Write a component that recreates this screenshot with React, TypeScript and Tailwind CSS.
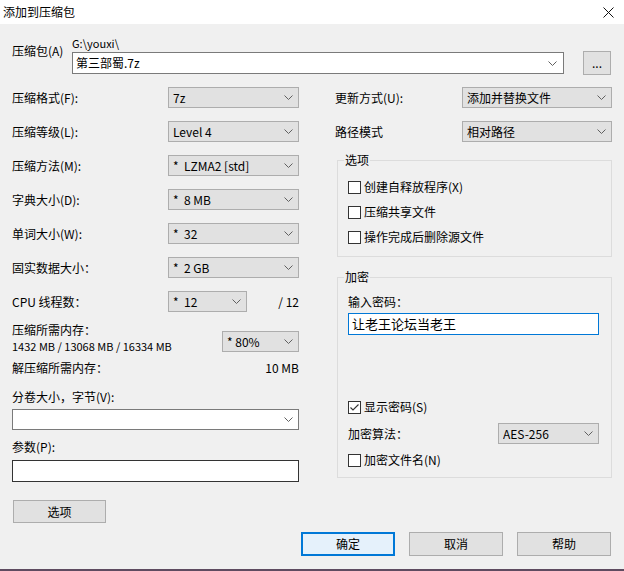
import React from "react";

const FONT = { fontFamily: '"Noto Sans CJK SC", "Liberation Sans", sans-serif' };

function Chevron() {
  return (
    <svg width="9" height="5" viewBox="0 0 9 5" className="shrink-0">
      <path d="M0.5 0.5 L4.5 4.5 L8.5 0.5" fill="none" stroke="#606060" strokeWidth="1" />
    </svg>
  );
}

function Combo({ value, className = "", white = false }: { value?: string; className?: string; white?: boolean }) {
  return (
    <div
      className={`flex h-[21px] items-center border pl-[4px] pr-[5px] ${
        white ? "border-[#7a7a7a] bg-white" : "border-[#adadad] bg-[#e1e1e1]"
      } ${className}`}
    >
      <span className="flex-1 truncate whitespace-pre leading-[16px]">{value}</span>
      <Chevron />
    </div>
  );
}

function CheckBox({ checked = false, label }: { checked?: boolean; label: string }) {
  return (
    <div className="flex h-[18px] items-center">
      <div className="flex h-[13px] w-[13px] items-center justify-center border border-[#333333] bg-white">
        {checked && (
          <svg width="11" height="11" viewBox="0 0 11 11">
            <path d="M1.5 5.5 L4 8 L9.5 2.5" fill="none" stroke="#333333" strokeWidth="1.1" />
          </svg>
        )}
      </div>
      <span className="ml-[3px] leading-[16px]">{label}</span>
    </div>
  );
}

function Button({ label, def = false, className = "" }: { label: string; def?: boolean; className?: string }) {
  return (
    <div
      className={`flex h-[24px] w-[94px] items-center justify-center border ${
        def
          ? "border-[#0078d7] bg-[#e5f1fb] shadow-[inset_0_0_0_1px_#0078d7]"
          : "border-[#adadad] bg-[#e1e1e1]"
      } ${className}`}
    >
      {label}
    </div>
  );
}

function Row({ label, children }: { label: string; children: React.ReactNode }) {
  return (
    <div className="flex h-[21px] items-center">
      <span className="flex-1 leading-[16px]">{label}</span>
      {children}
    </div>
  );
}

export default function App() {
  return (
    <div className="flex h-[571px] w-[624px] flex-col bg-[#f0f0f0] text-[12px] text-black" style={FONT}>
      {/* Title bar */}
      <div className="flex h-[24px] shrink-0 items-center bg-white pl-[3px] pr-[10px]">
        <span className="flex-1 leading-[16px]">添加到压缩包</span>
        <svg width="11" height="11" viewBox="0 0 11 11">
          <path d="M0.5 0.5 L10.5 10.5 M10.5 0.5 L0.5 10.5" stroke="#111" strokeWidth="1" />
        </svg>
      </div>

      {/* Archive */}
      <div className="mt-[12px] flex pl-[12px]">
        <span className="mt-[7px] w-[60px] leading-[16px]">压缩包(A)</span>
        <div className="flex flex-col">
          <span className="h-[14px] text-[11px] leading-[14px]">G:\youxi\</span>
          <div className="mt-[1px] flex items-start">
            <div className="mt-[1px] flex h-[22px] w-[492px] items-center border border-[#7a7a7a] bg-white pl-[3px] pr-[6px]">
              <span className="flex-1 leading-[16px]">第三部蜀.7z</span>
              <Chevron />
            </div>
            <div className="ml-[19px] flex h-[24px] w-[28px] items-center justify-center border border-[#adadad] bg-[#e1e1e1] leading-[16px]">
              ...
            </div>
          </div>
        </div>
      </div>

      {/* Main */}
      <div className="mt-[12px] flex pl-[12px]">
        {/* Left column */}
        <div className="flex w-[287px] flex-col">
          <div className="flex flex-col gap-[13px]">
            <Row label="压缩格式(F):">
              <Combo value="7z" className="w-[131px]" />
            </Row>
            <Row label="压缩等级(L):">
              <Combo value="Level 4" className="w-[131px]" />
            </Row>
            <Row label="压缩方法(M):">
              <Combo value="*  LZMA2 [std]" className="w-[131px]" />
            </Row>
            <Row label="字典大小(D):">
              <Combo value="*  8 MB" className="w-[131px]" />
            </Row>
            <Row label="单词大小(W):">
              <Combo value="*  32" className="w-[131px]" />
            </Row>
            <Row label="固实数据大小：">
              <Combo value="*  2 GB" className="w-[131px]" />
            </Row>
            <div className="flex h-[21px] items-center">
              <span className="w-[156px] leading-[16px]">CPU 线程数：</span>
              <Combo value="*  12" className="w-[79px]" />
              <span className="flex-1 text-right leading-[16px]">/ 12</span>
            </div>
          </div>

          <div className="mt-[10px] flex items-start">
            <div className="flex flex-1 flex-col leading-[16px]">
              <span>压缩所需内存：</span>
              <span className="text-[11px]">1432 MB / 13068 MB / 16334 MB</span>
            </div>
            <Combo value="* 80%" className="mt-[9px] w-[77px]" />
          </div>

          <div className="mt-[6px] flex leading-[16px]">
            <span className="flex-1">解压缩所需内存：</span>
            <span>10 MB</span>
          </div>

          <span className="mt-[13px] leading-[16px]">分卷大小，字节(V):</span>
          <Combo white className="mt-[4px] w-full" />

          <span className="mt-[9px] leading-[16px]">参数(P):</span>
          <div className="mt-[5px] h-[22px] w-full border border-[#333333] bg-white" />

          <div className="ml-[1px] mt-[18px] flex h-[23px] w-[93px] items-center justify-center border border-[#adadad] bg-[#e1e1e1]">
            选项
          </div>
        </div>

        {/* Right column */}
        <div className="ml-[36px] flex w-[277px] flex-col">
          <div className="flex flex-col gap-[13px]">
            <Row label="更新方式(U):">
              <Combo value="添加并替换文件" className="w-[150px]" />
            </Row>
            <Row label="路径模式">
              <Combo value="相对路径" className="w-[150px]" />
            </Row>
          </div>

          <fieldset className="ml-[2px] mt-[10px] w-[275px] border border-[#dcdcdc] px-[10px] pb-[10px] pt-[10px]">
            <legend className="ml-[-4px] px-[1px] leading-[16px]">选项</legend>
            <div className="flex flex-col gap-[7px]">
              <CheckBox label="创建自释放程序(X)" />
              <CheckBox label="压缩共享文件" />
              <CheckBox label="操作完成后删除源文件" />
            </div>
          </fieldset>

          <fieldset className="ml-[2px] mt-[12px] w-[275px] border border-[#dcdcdc] px-[10px] pb-[8px] pt-[9px]">
            <legend className="ml-[-4px] px-[1px] leading-[16px]">加密</legend>
            <div className="flex flex-col">
              <span className="leading-[16px]">输入密码：</span>
              <div className="mt-[3px] flex h-[22px] w-[251px] items-center border border-[#0078d7] bg-white pl-[3px]">
                <span className="text-[13px] leading-[16px]">让老王论坛当老王</span>
              </div>
              <div className="mt-[63px]">
                <CheckBox checked label="显示密码(S)" />
              </div>
              <div className="mt-[7px] flex h-[21px] items-center">
                <span className="w-[150px] leading-[16px]">加密算法：</span>
                <Combo value="AES-256" className="w-[101px]" />
              </div>
              <div className="mt-[7px]">
                <CheckBox label="加密文件名(N)" />
              </div>
            </div>
          </fieldset>
        </div>
      </div>

      {/* Bottom buttons */}
      <div className="mt-[9px] flex justify-end gap-[14px] pr-[13px]">
        <Button label="确定" def />
        <Button label="取消" />
        <Button label="帮助" />
      </div>

      <div className="mt-auto h-[2px] shrink-0 bg-[#5e4b60]" />
    </div>
  );
}
